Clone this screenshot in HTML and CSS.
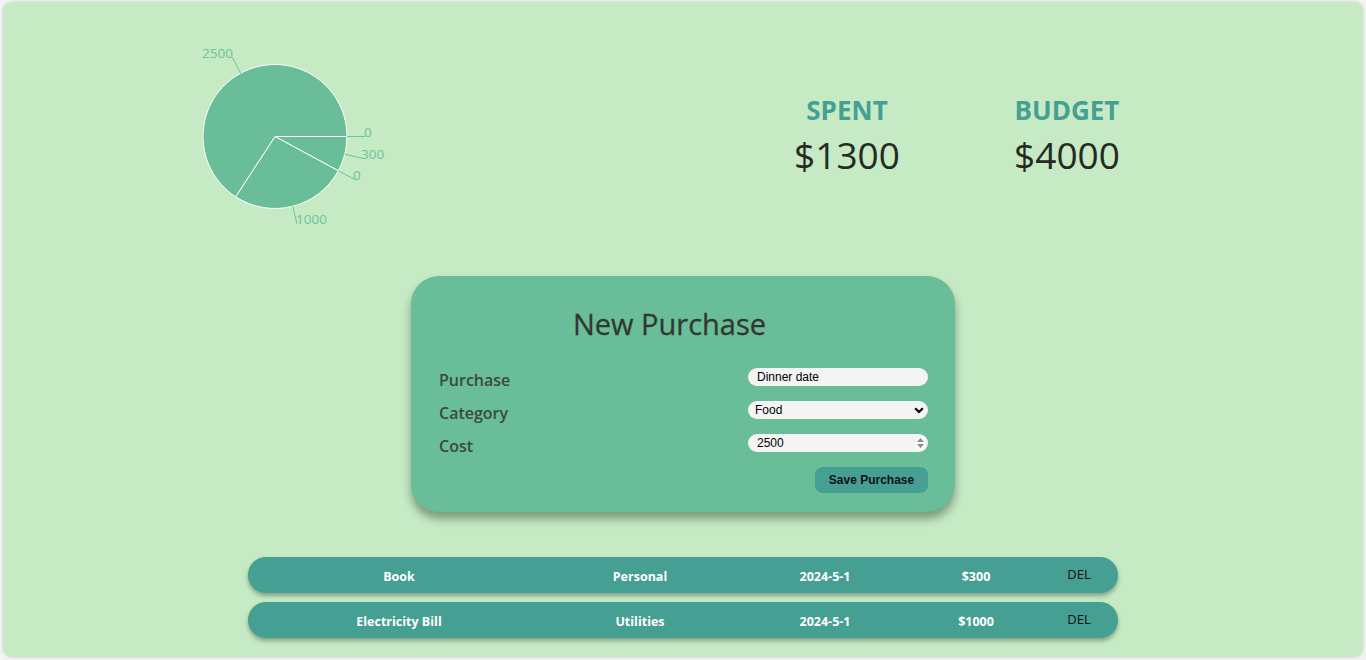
FILE: index.html
```html
<!DOCTYPE html>
<html>
<head>
<meta charset="utf-8">
<link rel="stylesheet" href="styles.css">
</head>
<body>
<div class="app">
  <div class="top">
    <svg class="pie" width="400" height="270" viewBox="75 2 400 270">
      <g fill="#6abd99" stroke="#ffffff" stroke-width="1">
        <path d="M275,136.5 L347,136.5 A72,72 0 0 1 338.32,170.77 Z"/>
        <path d="M275,136.5 L338.32,170.77 A72,72 0 0 1 235.62,196.77 Z"/>
        <path d="M275,136.5 L235.62,196.77 A72,72 0 1 1 347,136.5 Z"/>
      </g>
      <g stroke="#6cc49c" stroke-width="1" fill="none">
        <path d="M347,136.5 L365,136.5"/>
        <path d="M344.8,154.2 L363,158.5"/>
        <path d="M338.3,170.8 L355,179.5"/>
        <path d="M292.7,206.3 L297,224"/>
        <path d="M240.7,73.2 L232,57"/>
      </g>
      <g class="plabel" fill="#6cc49c">
        <text x="364" y="132" dominant-baseline="central">0</text>
        <text x="361" y="154" dominant-baseline="central">300</text>
        <text x="353" y="175" dominant-baseline="central">0</text>
        <text x="296" y="219" dominant-baseline="central">1000</text>
        <text x="233" y="53" text-anchor="end" dominant-baseline="central">2500</text>
      </g>
    </svg>
    <div class="stats">
      <div class="stat">
        <div class="stat-title">SPENT</div>
        <div class="stat-value">$1300</div>
      </div>
      <div class="stat">
        <div class="stat-title">BUDGET</div>
        <div class="stat-value">$4000</div>
      </div>
    </div>
  </div>

  <div class="card">
    <div class="card-title">New Purchase</div>
    <div class="form-row">
      <label class="form-label">Purchase</label>
      <input class="field" type="text" value="Dinner date">
    </div>
    <div class="form-row">
      <label class="form-label">Category</label>
      <div class="select-wrap">
        <select class="field select">
          <option>Food</option>
          <option>Personal</option>
          <option>Utilities</option>
        </select>
        <svg class="chev" width="10" height="7" viewBox="0 0 10 7"><path d="M1.2,1.2 L5,5 L8.8,1.2" fill="none" stroke="#000" stroke-width="2.2"/></svg>
      </div>
    </div>
    <div class="form-row">
      <label class="form-label">Cost</label>
      <div class="select-wrap">
        <input class="field num" type="number" value="2500">
        <svg class="spin" width="9" height="12" viewBox="0 0 9 12"><path d="M4.5,1 L8,5 L1,5 Z M1,7 L8,7 L4.5,11 Z" fill="#8c8c8c"/></svg>
      </div>
    </div>
    <div class="btn-row">
      <button class="save">Save Purchase</button>
    </div>
  </div>

  <div class="list">
    <div class="item">
      <span class="c1">Book</span>
      <span class="c2">Personal</span>
      <span class="c3">2024-5-1</span>
      <span class="c4">$300</span>
      <span class="del">DEL</span>
    </div>
    <div class="item">
      <span class="c1">Electricity Bill</span>
      <span class="c2">Utilities</span>
      <span class="c3">2024-5-1</span>
      <span class="c4">$1000</span>
      <span class="del">DEL</span>
    </div>
  </div>
</div>
</body>
</html>
```

FILE: styles.css
```css
* { box-sizing: border-box; }
html, body { margin: 0; padding: 0; }
body {
  background: #f3f3f3;
  font-family: "Open Sans", "Noto Sans", sans-serif;
  padding: 2px 3px 3px 3px;
}
.app {
  background: #c5eac4;
  height: 655px;
  border-radius: 9px;
  box-shadow: 0 0 3px rgba(0,0,0,0.18);
  display: flex;
  flex-direction: column;
  overflow: hidden;
}
.top {
  height: 274px;
  display: flex;
  align-items: flex-start;
}
.pie {
  display: block;
  margin-left: 72px;
  flex: none;
}
.plabel text {
  font-family: "Open Sans", sans-serif;
  font-size: 13.5px;
}
.stats {
  margin-left: auto;
  margin-right: 216px;
  display: flex;
  gap: 60px;
  padding-top: 92px;
}
.stat {
  width: 160px;
  text-align: center;
}
.stat-title {
  color: #45a093;
  font-weight: 700;
  font-size: 26px;
  line-height: 32px;
}
.stat-value {
  color: #262a22;
  font-size: 37px;
  line-height: 48px;
  margin-top: 5px;
}
.card {
  width: 544px;
  height: 236px;
  margin: 0 auto;
  background: #6abd99;
  border-radius: 28px;
  box-shadow: 0 7px 9px rgba(40,60,40,0.45);
  padding: 28px 27px 0 28px;
  display: flex;
  flex-direction: column;
}
.card-title {
  text-align: center;
  font-size: 29px;
  line-height: 40px;
  color: #323830;
  margin-bottom: 24px;
  margin-right: 28px;
  -webkit-text-stroke: 0.3px #323830;
}
.form-row {
  display: flex;
  justify-content: space-between;
  align-items: flex-start;
  height: 24px;
  margin-bottom: 9px;
}
.form-label {
  font-size: 16px;
  line-height: 25px;
  font-weight: 600;
  color: #3a4a3e;
}
.field {
  display: block;
  width: 180px;
  height: 18px;
  border: none;
  border-radius: 9px;
  background: #f4f4f4;
  font-family: "Liberation Sans", Arial, sans-serif;
  font-size: 12px;
  color: #000;
  padding: 0 8px 0 9px;
  outline: none;
  margin: 0;
}
.select-wrap {
  position: relative;
  width: 180px;
  height: 18px;
}
.select {
  -webkit-appearance: none;
  appearance: none;
  padding-left: 7px;
}
.chev {
  position: absolute;
  right: 4px;
  top: 6px;
  pointer-events: none;
}
.num { padding-right: 3px; -moz-appearance: textfield; }
.num::-webkit-inner-spin-button,
.num::-webkit-outer-spin-button { -webkit-appearance: none; margin: 0; }
.spin {
  position: absolute;
  right: 3px;
  top: 3px;
  background: #fbfbfb;
  pointer-events: none;
}
.btn-row {
  display: flex;
  justify-content: flex-end;
}
.save {
  width: 113px;
  height: 26px;
  border: none;
  border-radius: 8px;
  background: #459f92;
  color: #111;
  font-family: "Liberation Sans", Arial, sans-serif;
  font-weight: 700;
  font-size: 12px;
  padding: 0;
}
.list {
  margin-top: 45px;
  display: flex;
  flex-direction: column;
  gap: 9px;
  align-items: center;
}
.item {
  width: 870px;
  height: 36px;
  border-radius: 18px;
  background: #459f92;
  box-shadow: 0 3px 4px rgba(40,60,40,0.4);
  display: grid;
  grid-template-columns: 302px 180px 190px 112px 1fr;
  align-items: center;
  color: #ffffff;
  font-weight: 700;
  font-size: 12.5px;
  text-align: center;
  padding-top: 2px;
}
.del {
  color: #111;
  font-weight: 400;
  font-size: 13px;
  padding-left: 8px;
  padding-bottom: 5px;
}
```
